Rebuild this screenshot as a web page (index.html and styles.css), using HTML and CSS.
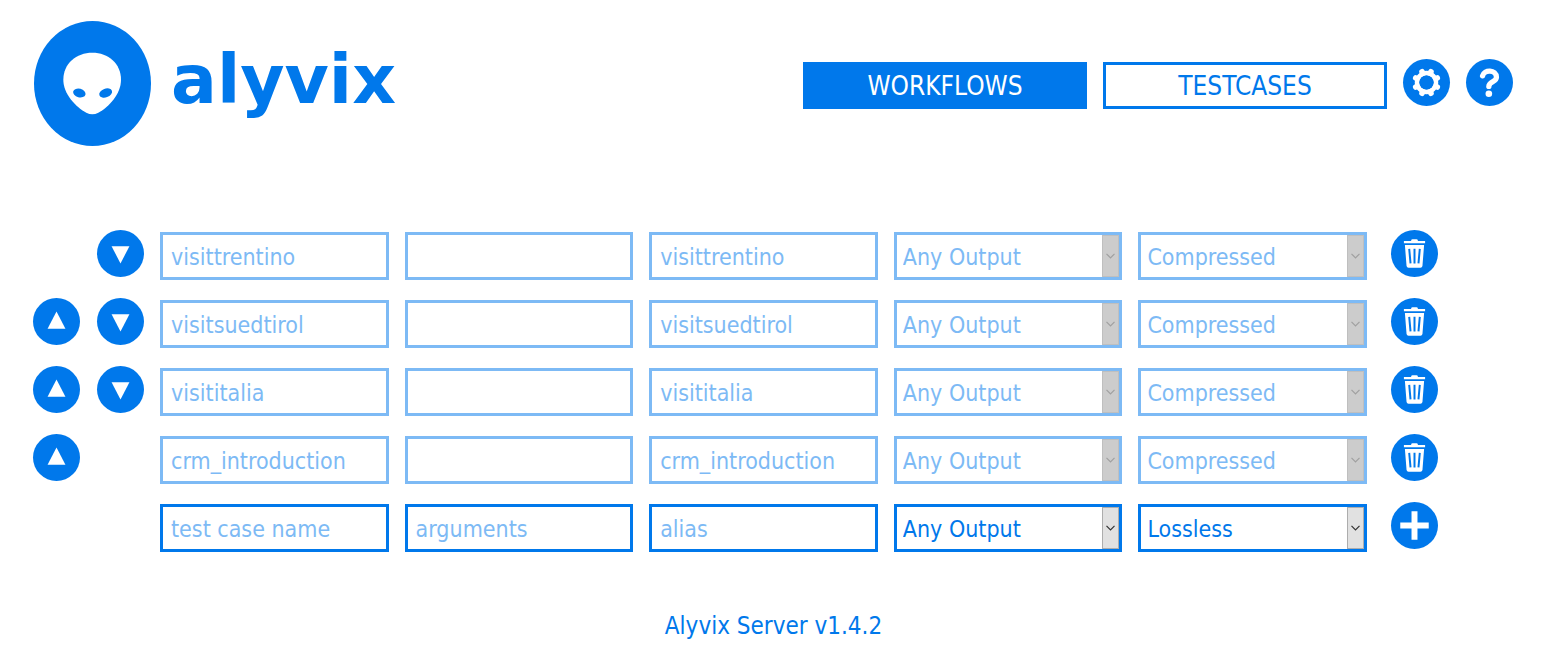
FILE: index.html
```
<!DOCTYPE html>
<html lang="en">
<head>
<meta charset="utf-8">
<title>Alyvix Server</title>
<link rel="stylesheet" href="styles.css">
</head>
<body>
<svg class="sprite" aria-hidden="true">
  <symbol id="down" viewBox="-71 -71 142 142"><path fill="#fff" d="M-27-22H27L0 30Z"/></symbol>
  <symbol id="up" viewBox="-71 -71 142 142"><path fill="#fff" d="M-27 22H27L0-30Z"/></symbol>
  <symbol id="trash" viewBox="-71 -71 142 142">
    <path fill="#fff" d="M-32-38H-10V-41Q-9-43-6-43H6Q9-43 10-41V-38H32V-31H-32ZM-29-26H29L24 38Q23 43 18 43H-18Q-23 43-24 38Z"/>
    <path stroke="#0078eb" stroke-width="6" d="M-16-14L-12 30M0-14V30M16-14L12 30"/>
  </symbol>
  <symbol id="plus" viewBox="-71 -71 142 142"><path stroke="#fff" stroke-width="18" d="M-43 0H43M0-43V43"/></symbol>
  <symbol id="gear" viewBox="-71 -71 142 142">
    <g fill="none" stroke="#fff">
      <circle r="28.500" stroke-width="14"/>
      <path stroke-width="17" stroke-linejoin="round" stroke-linecap="round" d="M11-27L13.500-32.500M27-11L32.500-13.500M27 11L32.500 13.500M11 27L13.500 32.500M-11 27L-13.500 32.500M-27 11L-32.500 13.500M-27-11L-32.500-13.500M-11-27L-13.500-32.500"/>
    </g>
    <circle r="21.500" fill="#0078eb"/>
  </symbol>
  <symbol id="help" viewBox="-71 -71 142 142">
    <path fill="none" stroke="#fff" stroke-width="16" stroke-linecap="round" d="M-21-20C-17-40 21-40 21-16C21-2-2-2-2 12"/>
    <circle cx="-2" cy="34" r="10" fill="#fff"/>
  </symbol>
  <symbol id="chevron" viewBox="0 0 9 6"><path fill="none" stroke="currentColor" stroke-width="1.200" d="M.5.8L4.500 4.800L8.500.8"/></symbol>
</svg>

<header class="header">
  <a class="brand" href="#">
    <svg class="brand-mark" viewBox="42 31 351 375" aria-hidden="true">
      <ellipse cx="217.500" cy="218.500" rx="175.500" ry="187.500" fill="#0078eb"/>
      <path fill="#fff" d="M217 126C265 126 303 158 303 207C303 249 268 288 235 306Q217 315 199 306C166 288 130 249 130 207C130 158 169 126 217 126Z"/>
      <ellipse cx="178" cy="247" rx="19" ry="13" transform="rotate(15 178 247)" fill="#0078eb"/>
      <ellipse cx="257" cy="247" rx="20" ry="13" transform="rotate(-20 257 247)" fill="#0078eb"/>
    </svg>
    <span class="brand-name">alyvix</span>
  </a>
  <nav class="nav">
    <button class="tab tab-active" type="button">WORKFLOWS</button>
    <button class="tab" type="button">TESTCASES</button>
    <button class="round" type="button" aria-label="Settings"><svg><use href="#gear"/></svg></button>
    <button class="round" type="button" aria-label="Help"><svg><use href="#help"/></svg></button>
  </nav>
</header>

<main class="cases">
  <div class="row">
    <button class="round down" type="button" aria-label="Move down"><svg><use href="#down"/></svg></button>
    <input class="field name" aria-label="Test case name" value="visittrentino" disabled>
    <input class="field arguments" aria-label="Arguments" disabled>
    <input class="field alias" aria-label="Alias" value="visittrentino" disabled>
    <div class="choice output"><select class="field" aria-label="Output" disabled><option>Any Output</option></select><span class="arrow"><svg><use href="#chevron"/></svg></span></div>
    <div class="choice quality"><select class="field" aria-label="Screenshots" disabled><option>Compressed</option></select><span class="arrow"><svg><use href="#chevron"/></svg></span></div>
    <button class="round action" type="button" aria-label="Delete"><svg><use href="#trash"/></svg></button>
  </div>
  <div class="row">
    <button class="round up" type="button" aria-label="Move up"><svg><use href="#up"/></svg></button>
    <button class="round down" type="button" aria-label="Move down"><svg><use href="#down"/></svg></button>
    <input class="field name" aria-label="Test case name" value="visitsuedtirol" disabled>
    <input class="field arguments" aria-label="Arguments" disabled>
    <input class="field alias" aria-label="Alias" value="visitsuedtirol" disabled>
    <div class="choice output"><select class="field" aria-label="Output" disabled><option>Any Output</option></select><span class="arrow"><svg><use href="#chevron"/></svg></span></div>
    <div class="choice quality"><select class="field" aria-label="Screenshots" disabled><option>Compressed</option></select><span class="arrow"><svg><use href="#chevron"/></svg></span></div>
    <button class="round action" type="button" aria-label="Delete"><svg><use href="#trash"/></svg></button>
  </div>
  <div class="row">
    <button class="round up" type="button" aria-label="Move up"><svg><use href="#up"/></svg></button>
    <button class="round down" type="button" aria-label="Move down"><svg><use href="#down"/></svg></button>
    <input class="field name" aria-label="Test case name" value="visititalia" disabled>
    <input class="field arguments" aria-label="Arguments" disabled>
    <input class="field alias" aria-label="Alias" value="visititalia" disabled>
    <div class="choice output"><select class="field" aria-label="Output" disabled><option>Any Output</option></select><span class="arrow"><svg><use href="#chevron"/></svg></span></div>
    <div class="choice quality"><select class="field" aria-label="Screenshots" disabled><option>Compressed</option></select><span class="arrow"><svg><use href="#chevron"/></svg></span></div>
    <button class="round action" type="button" aria-label="Delete"><svg><use href="#trash"/></svg></button>
  </div>
  <div class="row">
    <button class="round up" type="button" aria-label="Move up"><svg><use href="#up"/></svg></button>
    <input class="field name" aria-label="Test case name" value="crm_introduction" disabled>
    <input class="field arguments" aria-label="Arguments" disabled>
    <input class="field alias" aria-label="Alias" value="crm_introduction" disabled>
    <div class="choice output"><select class="field" aria-label="Output" disabled><option>Any Output</option></select><span class="arrow"><svg><use href="#chevron"/></svg></span></div>
    <div class="choice quality"><select class="field" aria-label="Screenshots" disabled><option>Compressed</option></select><span class="arrow"><svg><use href="#chevron"/></svg></span></div>
    <button class="round action" type="button" aria-label="Delete"><svg><use href="#trash"/></svg></button>
  </div>
  <div class="row">
    <input class="field name" aria-label="Test case name" placeholder="test case name">
    <input class="field arguments" aria-label="Arguments" placeholder="arguments">
    <input class="field alias" aria-label="Alias" placeholder="alias">
    <div class="choice output"><select class="field" aria-label="Output"><option>Any Output</option></select><span class="arrow"><svg><use href="#chevron"/></svg></span></div>
    <div class="choice quality"><select class="field" aria-label="Screenshots"><option>Lossless</option><option>Compressed</option></select><span class="arrow"><svg><use href="#chevron"/></svg></span></div>
    <button class="round action" type="button" aria-label="Add"><svg><use href="#plus"/></svg></button>
  </div>
</main>

<footer class="footer">Alyvix Server v1.4.2</footer>
</body>
</html>
```
FILE: styles.css
```
* { box-sizing: border-box; }

body {
  margin: 0;
  background: #fff;
  color: #0078eb;
  font-family: Tahoma, "DejaVu Sans Condensed", "Noto Sans", sans-serif;
  font-size: 24px;
}

.sprite { position: absolute; width: 0; height: 0; }

button, input, select { font: inherit; color: inherit; margin: 0; }

.header {
  display: flex;
  justify-content: space-between;
  align-items: flex-start;
  padding: 21px 34px 0;
}

.brand {
  display: flex;
  align-items: center;
  gap: 20px;
  color: inherit;
  text-decoration: none;
}

.brand-mark { display: block; width: 117px; height: 125px; }

.brand-name {
  padding-bottom: 8px;
  font-family: "DejaVu Sans", sans-serif;
  font-weight: bold;
  font-size: 68px;
  line-height: 80px;
}

.nav {
  display: flex;
  gap: 16px;
  padding-top: 38px;
}

.tab {
  width: 284px;
  height: 47px;
  margin-top: 3px;
  padding: 0;
  border: 3px solid #0078eb;
  background: #fff;
  font-size: 26px;
}

.tab-active { background: #0078eb; color: #fff; }

.round {
  width: 47px;
  height: 47px;
  padding: 0;
  border: 0;
  border-radius: 50%;
  background: #0078eb;
}

.round svg { display: block; width: 100%; height: 100%; }

.cases {
  display: grid;
  gap: 18px;
  padding: 84px 109px 0 33px;
}

.row {
  display: grid;
  grid-template-columns: 48px 47px repeat(5, minmax(0, 1fr)) 55px;
  column-gap: 16px;
  min-height: 50px;
  align-items: end;
}

.row > * { grid-row: 1; }
.row .round { align-self: start; }
.up { grid-column: 1; }
.down { grid-column: 2; }
.name { grid-column: 3; }
.arguments { grid-column: 4; }
.alias { grid-column: 5; }
.output { grid-column: 6; }
.quality { grid-column: 7; }
.action { grid-column: 8; justify-self: end; }

.field {
  display: block;
  width: 100%;
  height: 48px;
  padding: 2px 8px 0;
  border: 3px solid #0078eb;
  border-radius: 0;
  background: #fff;
  font-size: 23px;
}

.field::placeholder { color: #7dbaf5; opacity: 1; }

.field:disabled {
  border-color: #7dbaf5;
  color: #7dbaf5;
  opacity: 1;
}

.choice { position: relative; }
.choice .field { appearance: none; padding: 2px 24px 0 6px; }

.arrow {
  position: absolute;
  top: 3px;
  right: 3px;
  bottom: 3px;
  display: grid;
  place-items: center;
  width: 17px;
  border: 1px solid #adadad;
  background: #e1e1e1;
  color: #333;
  pointer-events: none;
}

.arrow svg { width: 9px; height: 6px; }

.field:disabled + .arrow {
  border-color: #bfbfbf;
  background: #ccc;
  color: #a0a0a0;
}

.footer {
  padding: 58px 0 24px;
  line-height: 32px;
  text-align: center;
}
```
